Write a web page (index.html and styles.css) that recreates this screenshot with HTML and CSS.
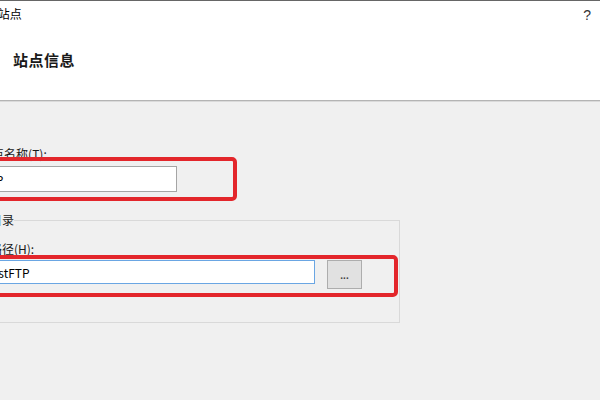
FILE: index.html
```html
<!DOCTYPE html>
<html lang="zh-CN">
<head>
<meta charset="utf-8">
<title>添加 FTP 站点</title>
<link rel="stylesheet" href="styles.css">
</head>
<body>
<div class="dialog">
  <div class="top">
    <div class="titlebar">
      <span class="title">添加 FTP 站点</span>
      <span class="help">?</span>
    </div>
    <h1 class="heading">站点信息</h1>
  </div>
  <div class="main">
    <div class="content">
      <label class="label first">FTP 站点名称(<u>T</u>):</label>
      <div class="input name">testFTP</div>
      <fieldset class="group">
        <legend class="legend">内容目录</legend>
        <label class="label second">物理路径(<u>H</u>):</label>
        <div class="row">
          <div class="input path">D:\testFTP</div>
          <button class="browse" type="button">...</button>
        </div>
      </fieldset>
    </div>
    <div class="mark mark-name"></div>
    <div class="mark mark-path"></div>
  </div>
</div>
</body>
</html>
```

FILE: styles.css
```css
html, body {
  margin: 0;
  padding: 0;
}

body {
  font-family: "Noto Sans CJK SC", "Noto Sans", sans-serif;
  font-size: 12px;
  color: #000;
}

.dialog {
  width: 600px;
  height: 400px;
  overflow: hidden;
  background: #f0f0f0;
}

.top {
  box-sizing: border-box;
  height: 101px;
  background: #fff;
  border-top: 1px solid #666;
  border-bottom: 1px solid #b4b4b4;
  box-shadow: 0 1px 0 #dadada;
}

.titlebar {
  height: 27px;
  display: flex;
  justify-content: space-between;
  align-items: flex-start;
  padding-top: 5px;
  box-sizing: border-box;
  line-height: 16px;
}

.title {
  margin-left: -53px;
  white-space: nowrap;
  color: #000;
}

.help {
  font-family: "Liberation Sans", sans-serif;
  font-size: 14px;
  margin-right: 9px;
  color: #333;
  line-height: 18px;
}

.heading {
  margin: 22px 0 0 13px;
  font-size: 15px;
  font-weight: bold;
  line-height: 20px;
  letter-spacing: 0.5px;
  color: #1a1a1a;
}

.main {
  position: relative;
  padding-top: 45px;
}

.content {
  margin-left: -47px;
}

.label {
  display: block;
  line-height: 16px;
  white-space: nowrap;
  color: #1a1a1a;
}

.label.first {
  padding-left: 3px;
}

.input {
  box-sizing: border-box;
  background: #fff;
  display: flex;
  align-items: center;
  padding-left: 4px;
  white-space: nowrap;
  overflow: hidden;
}

.input.name {
  margin: 4px 0 0 3px;
  width: 221px;
  height: 26px;
  border: 1px solid #a5a5a5;
}

.group {
  box-sizing: border-box;
  width: 447px;
  margin: 20px 0 0 0;
  padding: 0 10px 33px 12px;
  border: 1px solid #d9d9d9;
  min-width: 0;
}

.legend {
  padding: 0;
  line-height: 16px;
  color: #1a1a1a;
}

.label.second {
  margin-top: 13px;
}

.row {
  display: flex;
  align-items: flex-start;
  margin-top: 3px;
}

.input.path {
  width: 349px;
  height: 24px;
  border: 1px solid #6aa6e3;
}

.browse {
  box-sizing: border-box;
  margin-left: 12px;
  width: 35px;
  height: 29px;
  background: #e1e1e1;
  border: 1px solid #adadad;
  border-radius: 0;
  padding: 2px 0 0 0;
  font-family: "Liberation Sans", sans-serif;
  font-size: 10px;
  font-weight: bold;
  color: #444;
  line-height: 1;
}

.mark {
  position: absolute;
  box-sizing: border-box;
  border: 4px solid #e3262b;
  border-radius: 5px;
  left: -10px;
}

.mark-name {
  top: 56px;
  width: 247px;
  height: 44px;
}

.mark-path {
  top: 154px;
  width: 408px;
  height: 42px;
}
```
